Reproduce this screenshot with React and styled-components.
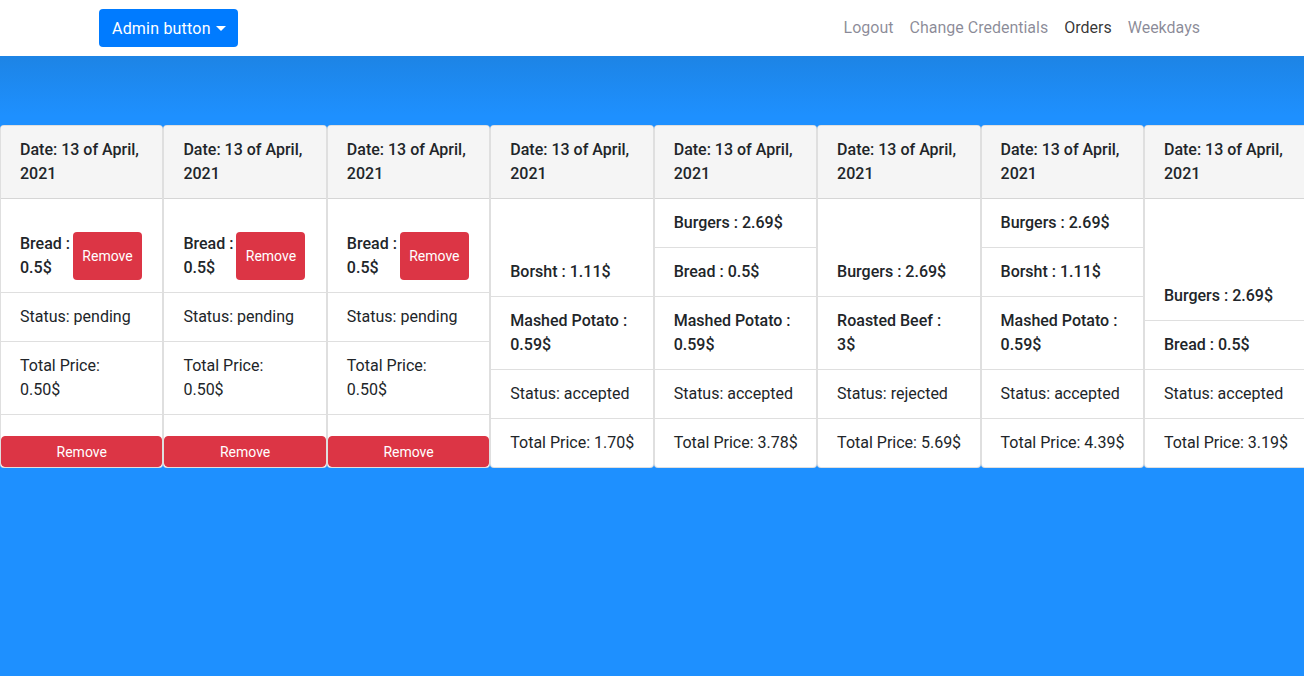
import React from "react";
import styled, { createGlobalStyle } from "styled-components";

const GlobalStyle = createGlobalStyle`
  html, body {
    margin: 0;
    padding: 0;
    overflow-x: hidden;
  }
  body {
    font-family: Roboto, "Liberation Sans", sans-serif;
    font-size: 16px;
    line-height: 24px;
    color: #212529;
    background: #1e90ff;
  }
  * { box-sizing: border-box; }
`;

const Nav = styled.nav`
  height: 56px;
  background: #fff;
  display: flex;
  align-items: center;
  justify-content: space-between;
  padding: 0 96px 0 99px;
`;

const AdminButton = styled.button`
  display: flex;
  align-items: center;
  height: 38px;
  padding: 0 12px 0 13px;
  background: #007bff;
  color: #fff;
  border: none;
  border-radius: 4px;
  font-family: inherit;
  font-size: 16px;
  letter-spacing: 0.2px;
  cursor: pointer;
  &::after {
    content: "";
    margin-left: 5px;
    border-top: 5px solid #fff;
    border-left: 5px solid transparent;
    border-right: 5px solid transparent;
  }
`;

const Links = styled.div`
  display: flex;
`;

const NavLink = styled.a`
  padding: 0 8px;
  color: ${(p) => (p.$active ? "rgba(0,0,0,0.8)" : "rgba(20,20,50,0.5)")};
  text-decoration: none;
  font-size: 16px;
`;

const Main = styled.main`
  min-height: calc(100vh - 56px);
  background: linear-gradient(to bottom, #1d84e5 0, #1e90ff 60px, #1e90ff 100%);
  padding-top: 69px;
`;

const CardRow = styled.div`
  display: flex;
  align-items: stretch;
  width: 1308px;
`;

const Card = styled.div`
  flex: 0 0 163.43px;
  display: flex;
  flex-direction: column;
  background: #fff;
  border: 1px solid rgba(0, 0, 0, 0.125);
  border-radius: 4px;
  overflow: hidden;
`;

const CardHeader = styled.div`
  padding: 12px 19px;
  background: #f5f5f5;
  border-bottom: 1px solid rgba(0, 0, 0, 0.125);
  font-weight: 500;
`;

const CardBody = styled.div`
  flex: 1;
  display: flex;
  flex-direction: column;
`;

const List = styled.ul`
  list-style: none;
  margin: auto 0 0;
  padding: 0;
`;

const Item = styled.li`
  display: flex;
  align-items: stretch;
  padding: 12px 19px;
  font-weight: ${(p) => (p.$bold ? 500 : 400)};
  border-bottom: 1px solid rgba(0, 0, 0, 0.125);
  &:last-child {
    border-bottom: ${(p) => (p.$flushEnd ? "none" : "1px solid rgba(0, 0, 0, 0.125)")};
  }
`;

const ItemText = styled.span`
  white-space: nowrap;
`;

const SmallRemove = styled.button`
  width: 69px;
  flex: 0 0 69px;
  margin-left: 3px;
  background: #dc3545;
  color: #fff;
  border: none;
  border-radius: 4px;
  font-family: inherit;
  font-size: 14px;
  cursor: pointer;
`;

const WideRemove = styled.button`
  margin-top: auto;
  width: 100%;
  height: 31px;
  background: #dc3545;
  color: #fff;
  border: 1px solid #dc3545;
  border-radius: 4px;
  font-family: inherit;
  font-size: 14px;
  cursor: pointer;
`;

const orders = [
  { pending: true, items: [["Bread", "0.5$"]], status: "pending", total: "0.50$" },
  { pending: true, items: [["Bread", "0.5$"]], status: "pending", total: "0.50$" },
  { pending: true, items: [["Bread", "0.5$"]], status: "pending", total: "0.50$" },
  {
    items: [["Borsht", "1.11$"], ["Mashed Potato", "0.59$", true]],
    status: "accepted",
    total: "1.70$",
  },
  {
    items: [["Burgers", "2.69$"], ["Bread", "0.5$"], ["Mashed Potato", "0.59$", true]],
    status: "accepted",
    total: "3.78$",
  },
  {
    items: [["Burgers", "2.69$"], ["Roasted Beef", "3$", true]],
    status: "rejected",
    total: "5.69$",
  },
  {
    items: [["Burgers", "2.69$"], ["Borsht", "1.11$"], ["Mashed Potato", "0.59$", true]],
    status: "accepted",
    total: "4.39$",
  },
  {
    items: [["Burgers", "2.69$"], ["Bread", "0.5$"]],
    status: "accepted",
    total: "3.19$",
  },
];

function OrderCard({ order }) {
  return (
    <Card>
      <CardHeader>
        Date: 13 of April,
        <br />
        2021
      </CardHeader>
      <CardBody>
        <List>
          {order.items.map(([name, price, wrap], i) => (
            <Item key={i} $bold>
              {order.pending ? (
                <>
                  <ItemText>
                    {name} :<br />
                    {price}
                  </ItemText>
                  <SmallRemove>Remove</SmallRemove>
                </>
              ) : (
                <ItemText>
                  {name} :{wrap ? <br /> : " "}
                  {price}
                </ItemText>
              )}
            </Item>
          ))}
          <Item>
            <ItemText>Status: {order.status}</ItemText>
          </Item>
          <Item $flushEnd={!order.pending}>
            <ItemText>
              Total Price:{order.pending ? <br /> : " "}
              {order.total}
            </ItemText>
          </Item>
        </List>
        {order.pending && <WideRemove>Remove</WideRemove>}
      </CardBody>
    </Card>
  );
}

export default function App() {
  return (
    <>
      <GlobalStyle />
      <Nav>
        <AdminButton>Admin button</AdminButton>
        <Links>
          <NavLink href="#">Logout</NavLink>
          <NavLink href="#">Change Credentials</NavLink>
          <NavLink href="#" $active>Orders</NavLink>
          <NavLink href="#">Weekdays</NavLink>
        </Links>
      </Nav>
      <Main>
        <CardRow>
          {orders.map((o, i) => (
            <OrderCard key={i} order={o} />
          ))}
        </CardRow>
      </Main>
    </>
  );
}
